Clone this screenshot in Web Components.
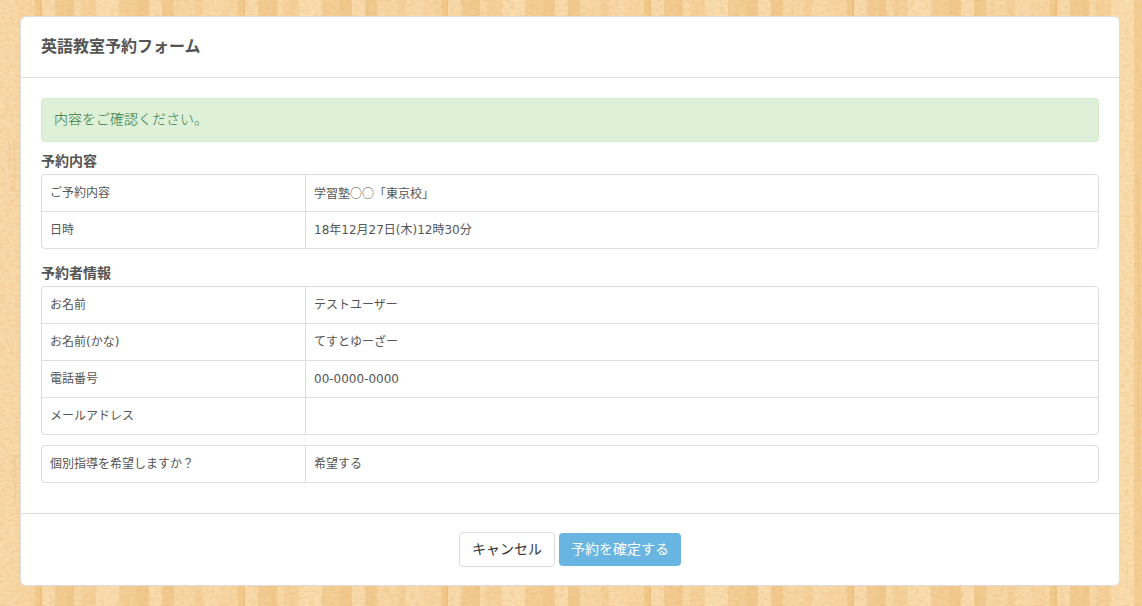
<!DOCTYPE html>
<html lang="ja">
<head>
<meta charset="utf-8">
<meta name="viewport" content="width=device-width, initial-scale=1">
<title>英語教室予約フォーム</title>
<style>
  body {
    margin: 0;
    padding: 16px 22px 20px 20px;
    color: #555;
    background: #f6d4a0;
    font: 14px/22px "DejaVu Sans", "Noto Sans CJK JP", sans-serif;
  }

  detail-table[heading] + detail-table[heading] {
    margin-top: 15px;
  }

  .cjk {
    font-family: "Noto Sans CJK JP", sans-serif;
  }
</style>
</head>
<body>
  <wood-background></wood-background>

  <form-panel>
    <span slot="title">英語教室予約フォーム</span>

    <alert-message>内容をご確認ください。</alert-message>

    <detail-table heading="予約内容">
      <span data-label="ご予約内容" class="cjk">学習塾○○「東京校」</span>
      <span data-label="日時">18年12月27日(木)12時30分</span>
    </detail-table>

    <detail-table heading="予約者情報">
      <span data-label="お名前">テストユーザー</span>
      <span data-label="お名前(かな)">てすとゆーざー</span>
      <span data-label="電話番号">00-0000-0000</span>
      <span data-label="メールアドレス"></span>
    </detail-table>

    <detail-table>
      <span data-label="個別指導を希望しますか？">希望する</span>
    </detail-table>

    <action-button slot="actions">キャンセル</action-button>
    <action-button slot="actions" kind="primary">予約を確定する</action-button>
  </form-panel>

<script>
class WoodBackground extends HTMLElement {
  constructor() {
    super();
    this._shadowRoot = this.attachShadow({ mode: 'open' });
  }

  connectedCallback() {
    // [x, width, colour] of each plank in one tile
    const planks = [
      [0, 17, '#f8d9a9'], [17, 18, '#f7d6a3'], [35, 5, '#f1ca8c'],
      [40, 2, '#eec282'], [42, 13, '#f8daab'], [55, 12, '#f2cc93'],
      [67, 7, '#f1c98e'], [74, 7, '#f7d9a7'], [81, 15, '#f5d19b'],
      [96, 23, '#f9ddae'], [119, 18, '#f3ce96'], [137, 12, '#f1c98e'],
      [149, 13, '#f9dbad'], [162, 12, '#f1ca90'], [174, 21, '#f7d7a5'],
      [195, 8, '#f4d19b']
    ];
    // [x, y, length] of the darker grain streaks
    const streaks = [
      [14, 138, 54], [9, 141, 29], [15, 454, 51], [13, 459, 24],
      [71, 80, 140], [143, 20, 180], [123, 180, 300],
      [164, 10, 220], [48, 300, 250]
    ];

    this._shadowRoot.innerHTML = `
      <style>
        :host {
          position: fixed;
          inset: 0;
          z-index: -1;
        }

        svg {
          display: block;
          width: 100%;
          height: 100%;
        }
      </style>
      <svg aria-hidden="true">
        <filter id="grain" x="0" y="0" width="100%" height="100%" color-interpolation-filters="sRGB">
          <feTurbulence type="fractalNoise" baseFrequency="0.2 0.4" numOctaves="3" seed="4" />
          <feColorMatrix values="0 0 0 0 0.9  0 0 0 0 0.7  0 0 0 0 0.42  0.8 0 0 0 -0.32" />
        </filter>
        <pattern id="wood" width="203" height="640" patternUnits="userSpaceOnUse">
          ${planks
            .map(([x, w, fill]) => `<rect x="${x}" width="${w}" height="640" fill="${fill}" />`)
            .join('')}
          ${streaks
            .map(([x, y, l]) => `<path d="M${x} ${y}q2 ${l / 2} 0 ${l}" fill="none" stroke="#dda55a" stroke-opacity=".3" />`)
            .join('')}
        </pattern>
        <rect width="100%" height="100%" fill="url(#wood)" />
        <rect width="100%" height="100%" filter="url(#grain)" />
      </svg>`;
  }
}

class FormPanel extends HTMLElement {
  constructor() {
    super();
    this._shadowRoot = this.attachShadow({ mode: 'open' });
  }

  connectedCallback() {
    this._shadowRoot.innerHTML = `
      <style>
        :host {
          display: block;
          border: 1px solid #ddd;
          border-radius: 6px;
          background: #fff;
        }

        header {
          padding: 19px 20px;
          border-bottom: 1px solid #ddd;
        }

        h1 {
          margin: 0;
          font-size: 16px;
          line-height: 22px;
        }

        main {
          padding: 20px;
        }

        footer {
          display: flex;
          justify-content: center;
          align-items: center;
          gap: 4px;
          padding: 18px 20px;
          border-top: 1px solid #ddd;
        }
      </style>
      <header><h1><slot name="title"></slot></h1></header>
      <main><slot></slot></main>
      <footer><slot name="actions"></slot></footer>`;
  }
}

class AlertMessage extends HTMLElement {
  constructor() {
    super();
    this._shadowRoot = this.attachShadow({ mode: 'open' });
  }

  connectedCallback() {
    this._shadowRoot.innerHTML = `
      <style>
        :host {
          display: block;
          margin-bottom: 10px;
          padding: 9px 12px 11px;
          border: 1px solid #d0e9c6;
          border-radius: 4px;
          color: #2c7a3d;
          background: #dff0d8;
          font-weight: 300;
        }
      </style>
      <div role="status"><slot></slot></div>`;
  }
}

class DetailTable extends HTMLElement {
  constructor() {
    super();
    this._shadowRoot = this.attachShadow({ mode: 'open' });
  }

  connectedCallback() {
    const heading = this.getAttribute('heading');
    const rows = [...this.children];
    rows.forEach((row, i) => {
      row.slot = 'row-' + i;
    });

    this._shadowRoot.innerHTML = `
      <style>
        :host {
          display: block;
          margin-bottom: 10px;
        }

        h2 {
          margin: 0;
          padding-bottom: 4px;
          font-size: 14px;
          line-height: 18px;
        }

        table {
          width: 100%;
          table-layout: fixed;
          border: 1px solid #ddd;
          border-radius: 4px;
          border-spacing: 0;
          font-size: 12px;
          line-height: 20px;
        }

        th,
        td {
          height: 20px;
          padding: 8px;
          text-align: left;
          vertical-align: top;
          font-weight: normal;
        }

        th {
          width: 25%;
          box-sizing: border-box;
          border-right: 1px solid #ddd;
        }

        tr + tr > * {
          border-top: 1px solid #ddd;
        }

        ::slotted(*) {
          display: block;
        }
      </style>
      ${heading ? `<h2>${heading}</h2>` : ''}
      <table>
        ${rows
          .map(
            (row, i) =>
              `<tr><th scope="row">${row.dataset.label}</th><td><slot name="row-${i}"></slot></td></tr>`
          )
          .join('')}
      </table>`;
  }
}

class ActionButton extends HTMLElement {
  constructor() {
    super();
    this._shadowRoot = this.attachShadow({ mode: 'open' });
  }

  connectedCallback() {
    this._shadowRoot.innerHTML = `
      <style>
        :host {
          display: block;
        }

        button {
          display: block;
          padding: 6px 12px;
          border: 1px solid #ddd;
          border-radius: 4px;
          color: #333;
          background: #fff;
          font: inherit;
          line-height: 21px;
          cursor: pointer;
        }

        :host([kind="primary"]) button {
          border: 0;
          color: #fff;
          background: #69b5e2;
        }
      </style>
      <button type="button"><slot></slot></button>`;
  }
}

window.customElements.define('wood-background', WoodBackground);
window.customElements.define('form-panel', FormPanel);
window.customElements.define('alert-message', AlertMessage);
window.customElements.define('detail-table', DetailTable);
window.customElements.define('action-button', ActionButton);
</script>
</body>
</html>
